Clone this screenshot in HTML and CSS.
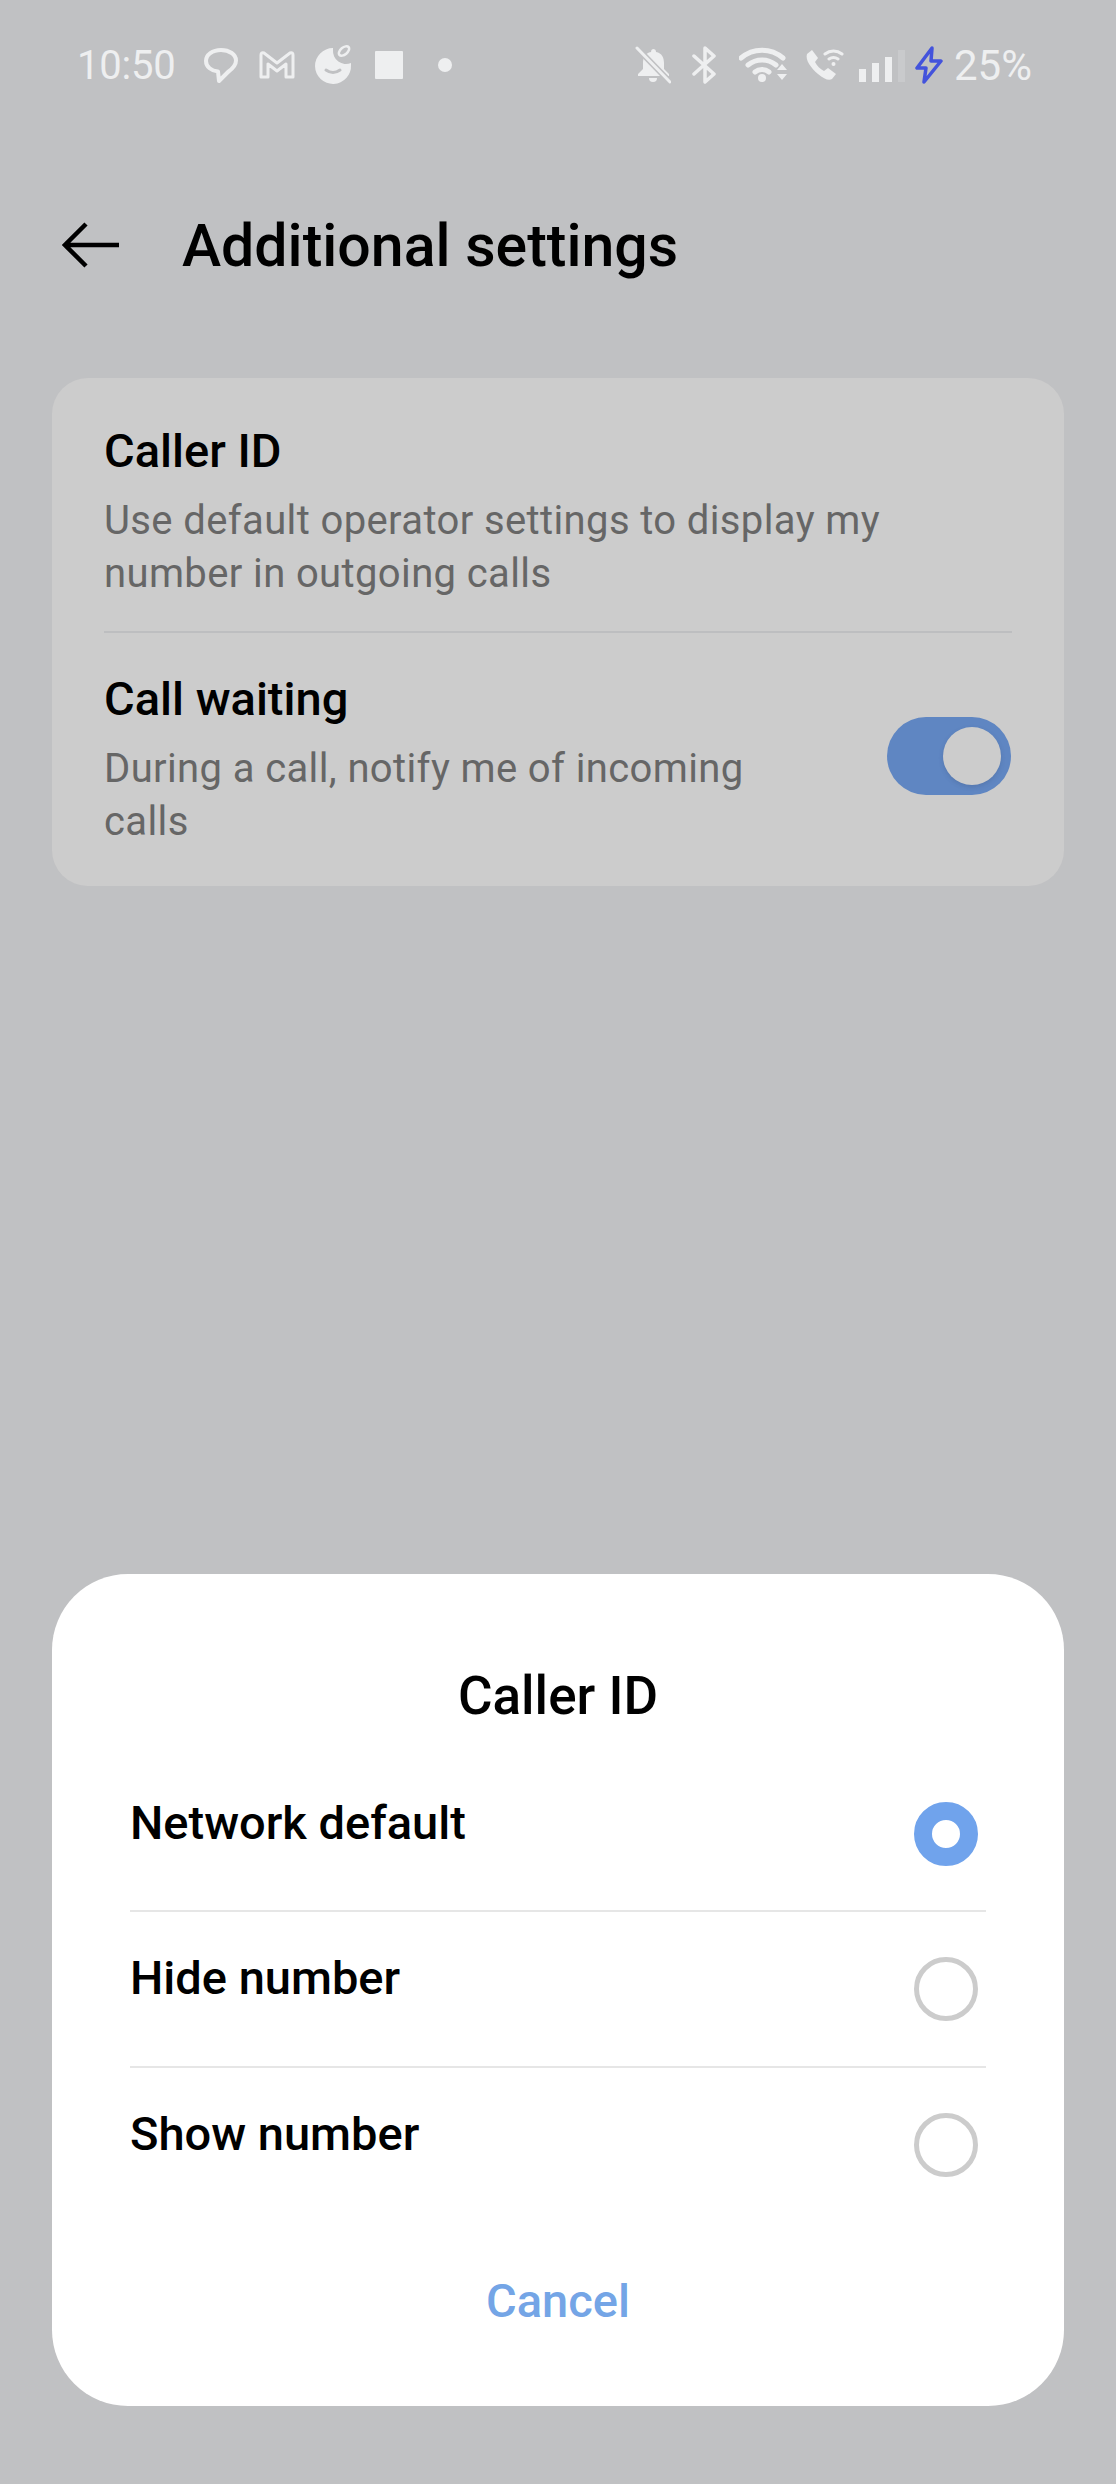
FILE: index.html
```html
<!DOCTYPE html>
<html lang="en">
<head>
<meta charset="utf-8">
<title>Additional settings</title>
<link rel="stylesheet" href="styles.css">
</head>
<body>
<div class="screen">
  <!-- status bar -->
  <div class="status">
    <div class="status-left">
      <span class="time">10:50</span>
      <svg class="ic" width="36" height="38" viewBox="0 0 36 38"><path d="M18 4C9.500 4 3 8.800 3 15c0 6 5.500 10 12 10.500l1 9.500 9-9c4.500-3.200 8-7 8-11.500C33 8.500 26.500 4 18 4z" fill="none" stroke="#eeeff0" stroke-width="4" stroke-linejoin="round"/></svg>
      <svg class="ic" width="38" height="30" viewBox="0 0 38 30"><path d="M3 27V5q0-3 3-2l13 10L32 3q3-1 3 2v22h-7V14l-9 7-9-7v13z" fill="none" stroke="#eeeff0" stroke-width="3" stroke-linejoin="round"/></svg>
      <svg class="ic" width="40" height="40" viewBox="0 0 40 40"><path d="M19 5a13 13 0 0 0 18 13v2A18 18 0 1 1 19 3z" fill="#eeeff0"/><path d="M12 25q7 5 14 0" fill="none" stroke="#c0c1c3" stroke-width="3" stroke-linecap="round"/><ellipse cx="30" cy="6" rx="6" ry="3.500" transform="rotate(-40 30 6)" fill="none" stroke="#eeeff0" stroke-width="2.500"/></svg>
      <span class="stop"></span>
      <span class="dot"></span>
    </div>
    <div class="status-right">
      <svg class="ic" width="36" height="38" viewBox="0 0 36 38"><path d="M18 3a3 3 0 0 1 3 3c6 1 8 6 8 11v6l5 5v2H3v-2l5-5v-6c0-5 2-10 8-11a3 3 0 0 1 2-3z" fill="#eeeff0"/><path d="M14 32h8a4 4 0 0 1-8 0z" fill="#eeeff0"/><path d="M1 1l34 35" stroke="#c0c1c3" stroke-width="6"/><path d="M2 2l33 34" stroke="#eeeff0" stroke-width="3" stroke-linecap="round"/></svg>
      <svg class="ic" width="26" height="38" viewBox="0 0 26 38"><path d="M2 10l20 18-9 8V2l9 8L2 28" fill="none" stroke="#eeeff0" stroke-width="3.500" stroke-linejoin="round" stroke-linecap="round"/></svg>
      <svg class="ic" width="50" height="38" viewBox="0 0 50 38"><path d="M2 12a32 32 0 0 1 42 0M9 19a22 22 0 0 1 28 0M16 26a11 11 0 0 1 14 0" fill="none" stroke="#eeeff0" stroke-width="5" stroke-linecap="round"/><circle cx="23" cy="32" r="4" fill="#eeeff0"/><path d="M38 24l5-6 5 6zM38 28h10l-5 6z" fill="#eeeff0"/></svg>
      <svg class="ic" width="40" height="36" viewBox="0 0 40 36"><path d="M3 7l5-4 6 8-3 4c2 4 5 7 9 9l4-3 8 6-4 5c-3 2-8 0-14-5C7 21 1 13 3 7z" fill="#eeeff0"/><path d="M21 7a14 14 0 0 1 17 0M25 12a8 8 0 0 1 9 0" fill="none" stroke="#eeeff0" stroke-width="3" stroke-linecap="round"/><circle cx="29.500" cy="17" r="2" fill="#eeeff0"/></svg>
      <div class="signal"><i class="b1"></i><i class="b2"></i><i class="b3"></i><i class="b4"></i></div>
      <svg class="ic" width="28" height="38" viewBox="0 0 28 38"><path d="M17 2L2 22h9l-2 14 17-21h-10z" fill="none" stroke="#4353dc" stroke-width="3.500" stroke-linejoin="round"/></svg>
      <span class="batt">25%</span>
    </div>
  </div>

  <!-- header -->
  <div class="header">
    <svg class="back" width="58" height="46" viewBox="0 0 58 46"><path d="M24 2L3 23l21 21M3 23h54" fill="none" stroke="#000" stroke-width="4.500"/></svg>
    <h1 class="title">Additional settings</h1>
  </div>

  <!-- settings list -->
  <div class="card">
    <div class="item">
      <div class="item-text">
        <div class="item-name">Caller ID</div>
        <div class="item-desc">Use default operator settings to display my number in outgoing calls</div>
      </div>
    </div>
    <div class="item item-line">
      <div class="item-text short">
        <div class="item-name">Call waiting</div>
        <div class="item-desc">During a call, notify me of incoming calls</div>
      </div>
      <div class="toggle"><span class="knob"></span></div>
    </div>
  </div>

  <!-- dialog -->
  <div class="sheet">
    <div class="sheet-title">Caller ID</div>
    <div class="opt"><span>Network default</span><i class="radio on"></i></div>
    <div class="opt opt-line"><span>Hide number</span><i class="radio"></i></div>
    <div class="opt opt-line"><span>Show number</span><i class="radio"></i></div>
    <div class="cancel">Cancel</div>
  </div>
</div>
</body>
</html>
```
FILE: styles.css
```css
/* reset */
html,body,div,h1{margin:0; padding:0;}
body{background:#c0c1c3; font-family:Roboto,"Noto Sans",sans-serif;}

.screen{width:1116px; height:2484px; position:relative; overflow:hidden; background:#c0c1c3;}

/* status bar */
.status{display:flex; justify-content:space-between; align-items:center; height:40px; padding:45px 84px 0 77px;}
.status-left,.status-right{display:flex; align-items:center;}
.ic{display:block; flex:none;}
.time{font-size:40px; color:#eeeff0; width:126px; letter-spacing:-.2px;}
.status-left .ic:nth-child(3){margin-left:19px;}
.status-left .ic:nth-child(4){margin-left:18px;}
.stop{width:28px; height:28px; background:#eeeff0; margin-left:21px; border-radius:1px;}
.dot{width:14px; height:14px; border-radius:50%; background:#eeeff0; margin-left:35px;}
.status-right .ic:nth-child(2){margin-left:21px;}
.status-right .ic:nth-child(3){margin-left:21px;}
.status-right .ic:nth-child(4){margin-left:15px;}
.signal{display:flex; align-items:flex-end; gap:6px; height:34px; margin-left:15px;}
.signal i{display:block; width:7px; background:#eeeff0;}
.signal .b1{height:13px;}
.signal .b2{height:19px;}
.signal .b3{height:25px;}
.signal .b4{height:32px; opacity:.2;}
.signal + .ic{margin-left:10px;}
.batt{font-size:42px; color:#eeeff0; margin-left:11px;}

/* header */
.header{display:flex; align-items:center; height:60px; margin-top:130px; padding-left:62px;}
.back{flex:none;}
.title{font-size:59px; font-weight:460; color:#000; margin-left:62px;}

/* list card */
.card{margin:103px 52px 0; background:#ccc; border-radius:36px; padding:0 52px; height:508px; box-sizing:border-box;}
.item{display:flex; align-items:center; justify-content:space-between;}
.item:first-child{padding-top:45px; padding-bottom:31px;}
.item:first-child .item-text{width:800px;}
.item-line{border-top:2px solid #bdbec0; padding-top:38px;}
.item-text.short{width:680px;}
.item-name{font-size:47px; font-weight:460; color:#000; line-height:56px;}
.item-desc{font-size:40px; color:#666; line-height:53px; margin-top:15px; letter-spacing:.38px;}
.toggle{width:124px; height:78px; border-radius:39px; background:#5f86c2; position:relative; flex:none; margin-top:-7px; margin-right:1px;}
.knob{position:absolute; top:10px; right:10px; width:58px; height:58px; border-radius:50%; background:#ccc; box-shadow:0 2px 4px rgba(60,80,120,.25);}

/* dialog */
.sheet{position:absolute; left:52px; right:52px; top:1574px; height:832px; background:#fff; border-radius:76px; padding:92px 78px 0; box-sizing:border-box;}
.sheet-title{font-size:53px; font-weight:460; color:#000; text-align:center; line-height:60px; margin-bottom:28px;}
.opt{display:flex; justify-content:space-between; height:156px; box-sizing:border-box; font-size:47px; font-weight:460; color:#000; padding-top:41px;}
.opt-line{border-top:2px solid #e6e6e6; padding-top:38px;}
.radio{display:block; width:64px; height:64px; border-radius:50%; border:5px solid #ccc; box-sizing:border-box; margin:7px 0 0; transform:translateX(-8px);}
.radio.on{border:18px solid #70a3ec;}
.cancel{font-size:47px; font-weight:460; color:#74a5e6; text-align:center; margin-top:51px;}
```
